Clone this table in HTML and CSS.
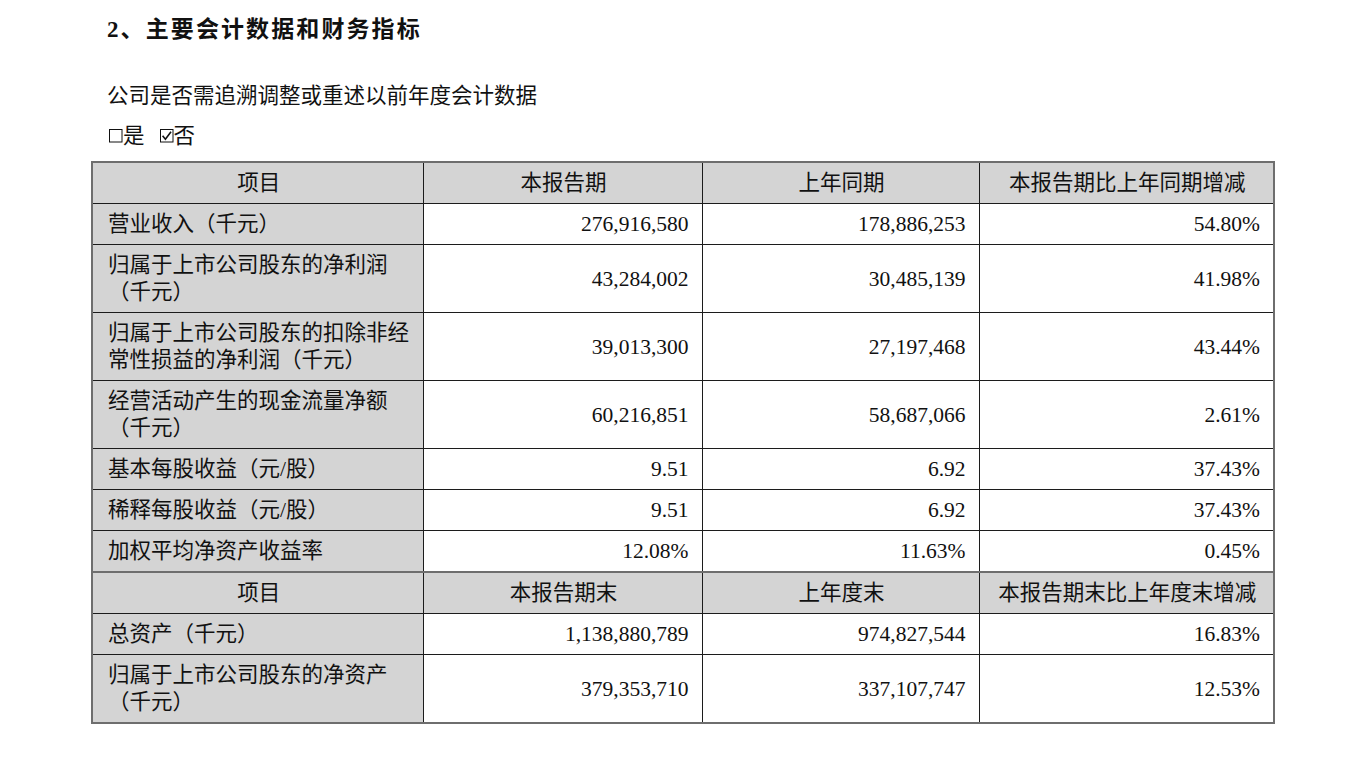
FILE: index.html
```html
<!DOCTYPE html>
<html lang="zh-CN">
<head>
<meta charset="utf-8">
<title>主要会计数据和财务指标</title>
<link rel="stylesheet" href="styles.css">
</head>
<body>
<div class="page">
  <h2 class="title">2、主要会计数据和财务指标</h2>
  <p class="para">公司是否需追溯调整或重述以前年度会计数据</p>
  <p class="para checks">
    <svg class="box" width="14" height="14" viewBox="0 0 14 14"><rect x="0.5" y="0.5" width="12.5" height="12.5" fill="none" stroke="#111" stroke-width="1"/></svg><span>是</span>
    <span class="gap"></span>
    <svg class="box" width="14" height="14" viewBox="0 0 14 14"><rect x="0.5" y="0.5" width="12.5" height="12.5" fill="none" stroke="#111" stroke-width="1"/><path d="M2.6 6.8 L5.4 10.2 L11 2.8" fill="none" stroke="#111" stroke-width="1.6"/></svg><span>否</span>
  </p>
  <table class="fin">
    <colgroup>
      <col class="c1"><col class="c2"><col class="c3"><col class="c4">
    </colgroup>
    <tr class="head">
      <th>项目</th><th>本报告期</th><th>上年同期</th><th>本报告期比上年同期增减</th>
    </tr>
    <tr><td class="lab">营业收入（千元）</td><td>276,916,580</td><td>178,886,253</td><td>54.80%</td></tr>
    <tr><td class="lab">归属于上市公司股东的净利润<br>（千元）</td><td>43,284,002</td><td>30,485,139</td><td>41.98%</td></tr>
    <tr><td class="lab">归属于上市公司股东的扣除非经<br>常性损益的净利润（千元）</td><td>39,013,300</td><td>27,197,468</td><td>43.44%</td></tr>
    <tr><td class="lab">经营活动产生的现金流量净额<br>（千元）</td><td>60,216,851</td><td>58,687,066</td><td>2.61%</td></tr>
    <tr><td class="lab">基本每股收益（元/股）</td><td>9.51</td><td>6.92</td><td>37.43%</td></tr>
    <tr><td class="lab">稀释每股收益（元/股）</td><td>9.51</td><td>6.92</td><td>37.43%</td></tr>
    <tr><td class="lab">加权平均净资产收益率</td><td>12.08%</td><td>11.63%</td><td>0.45%</td></tr>
    <tr class="head sep">
      <th>项目</th><th>本报告期末</th><th>上年度末</th><th>本报告期末比上年度末增减</th>
    </tr>
    <tr><td class="lab">总资产（千元）</td><td>1,138,880,789</td><td>974,827,544</td><td>16.83%</td></tr>
    <tr><td class="lab">归属于上市公司股东的净资产<br>（千元）</td><td>379,353,710</td><td>337,107,747</td><td>12.53%</td></tr>
  </table>
</div>
</body>
</html>
```

FILE: styles.css
```css
html, body {
  margin: 0;
  padding: 0;
  background: #ffffff;
}
body {
  font-family: "Liberation Serif", "Noto Sans CJK SC", serif;
  color: #111111;
  font-size: 21.5px;
}
.page {
  padding: 15px 0 0 91px;
}
.title {
  margin: 0 0 0 16px;
  font-size: 23px;
  font-weight: bold;
  line-height: 30px;
  letter-spacing: 2.1px;
}
.para {
  margin: 37px 0 0 16px;
  line-height: 28px;
}
.checks {
  margin-top: 12px;
  display: flex;
  align-items: center;
}
.box {
  display: block;
  margin-left: 2px;
  margin-right: 0;
}
.gap {
  width: 13px;
}
.fin {
  margin-top: 11px;
  border-collapse: collapse;
  border: 2px solid #6e6e6e;
  table-layout: fixed;
  width: 1182px;
}
.c1 { width: 331px; }
.c2 { width: 279px; }
.c3 { width: 277px; }
.c4 { width: 295px; }
.fin th, .fin td {
  border: 1px solid #1c1c1c;
  padding: 7px 13px 6px 15px;
  line-height: 27px;
  font-weight: normal;
  vertical-align: middle;
  white-space: nowrap;
}
.fin th {
  text-align: center;
  background: #d4d4d4;
}
.fin td {
  text-align: right;
}
.fin td.lab {
  text-align: left;
  background: #d4d4d4;
}
.fin tr.sep th {
  border-top: 2px solid #6e6e6e;
}
```
